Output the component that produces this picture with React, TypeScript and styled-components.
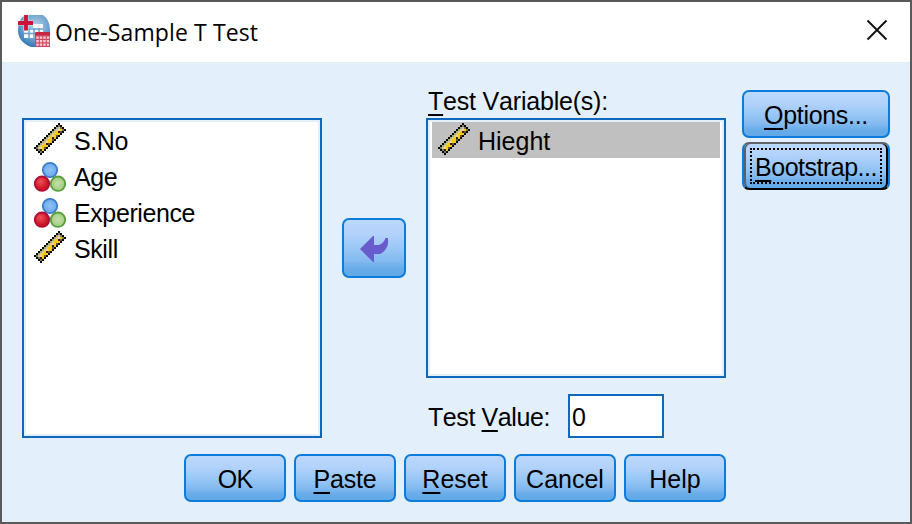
import React from 'react';
import styled, { createGlobalStyle, css } from 'styled-components';

const GlobalStyle = createGlobalStyle`
  *, *::before, *::after { box-sizing: border-box; }
  html, body { margin: 0; padding: 0; }
  button, input { font: inherit; color: inherit; margin: 0; padding: 0; }
`;

const Dialog = styled.div`
  width: 912px;
  height: 524px;
  display: flex;
  flex-direction: column;
  border: 2px solid #5a5a5a;
  background: #e3effb;
  color: #000;
  font-family: 'Liberation Sans', Arial, sans-serif;
  font-size: 25px;
  line-height: 36px;
  font-kerning: none;
  overflow: hidden;
`;

const TitleBar = styled.header`
  flex: none;
  height: 60px;
  display: flex;
  align-items: center;
  padding: 0 21px 0 16px;
  background: #fff;
  font-family: 'Open Sans', 'Noto Sans', sans-serif;
`;

const Title = styled.h1`
  flex: 1;
  margin: 0 0 0 5px;
  font-size: 23px;
  font-weight: 400;
  line-height: 32px;
  letter-spacing: 0.12px;
`;

const CloseButton = styled.button`
  width: 24px;
  height: 24px;
  margin-bottom: 4px;
  border: 0;
  background: none;
  display: flex;
`;

const Body = styled.main`
  flex: none;
  height: 376px;
  display: flex;
  align-items: flex-start;
  padding-left: 20px;
`;

const VariableList = styled.ul<{ $height: number }>`
  width: 300px;
  height: ${(p) => p.$height}px;
  margin: 0;
  padding: 2px 2px 0;
  list-style: none;
  background: #fff;
  border: 2px solid #0f68bd;
  box-shadow: inset 0 0 0 2px #e3effb;
`;

const SourceColumn = styled.section`
  margin-top: 56px;
`;

const VariableRow = styled.li<{ $selected?: boolean }>`
  height: 36px;
  margin: 0 2px;
  padding-left: 6px;
  display: flex;
  align-items: center;
  background: ${(p) => (p.$selected ? '#c0c0c0' : 'transparent')};
`;

const VariableName = styled.span<{ $tracking?: number }>`
  margin: 2px 0 0 8px;
  letter-spacing: ${(p) => p.$tracking ?? 0}px;
`;

const TargetColumn = styled.section`
  width: 300px;
  padding-top: 21px;
`;

const FieldLabel = styled.label<{ $tracking: number }>`
  display: block;
  margin-left: 2px;
  height: 35px;
  letter-spacing: ${(p) => p.$tracking}px;
  white-space: nowrap;
`;

const ValueRow = styled.div`
  display: flex;
  align-items: center;
  justify-content: space-between;
  width: 238px;
  margin-top: 16px;
`;

const ValueInput = styled.input`
  width: 96px;
  height: 44px;
  padding: 3px 0 0 2px;
  border: 2px solid #0f68bd;
  background: #fff;
  outline: none;
`;

const Key = styled.span`
  text-decoration: underline;
  text-decoration-thickness: 2px;
  text-underline-offset: 4px;
  text-decoration-skip-ink: none;
`;

const PushButton = styled.button<{ $width: number; $height?: number; $focused?: boolean; $tracking?: number }>`
  width: ${(p) => p.$width}px;
  height: ${(p) => p.$height ?? 48}px;
  display: flex;
  align-items: center;
  justify-content: center;
  padding: 2px 0 0;
  border: 2px solid #0b7bdc;
  border-radius: 7px;
  background: linear-gradient(#bbd7fc 0%, #b2d2fb 25%, #9ac8f6 50%, #84baf0 72%, #68ade9 86%, #62a7e7 100%);
  letter-spacing: ${(p) => p.$tracking ?? 0}px;
  white-space: nowrap;
  ${(p) =>
    p.$focused &&
    css`
      padding: 0;
      border-color: #5f6468 #0b7bdc #000 #0b7bdc;
      box-shadow: inset 2px 0 #55616c, inset -2px 0 #000;
    `}
`;

const FocusFrame = styled.span`
  width: 132px;
  height: 36px;
  border: 2px dotted #000;
  display: flex;
  align-items: center;
  justify-content: center;
  padding-top: 1px;
`;

const MoveSlot = styled.div`
  margin: 156px 20px 0;
`;

const SideButtons = styled.aside`
  display: flex;
  flex-direction: column;
  gap: 4px;
  margin: 28px 0 0 16px;
`;

const Footer = styled.footer`
  display: flex;
  gap: 8px;
  padding: 16px 0 0 182px;
`;

const Icon = styled.svg`
  display: block;
  flex: none;
`;

const ProductIcon = styled(Icon)`
  margin-bottom: 2px;
`;

const RulerSvg = styled(Icon)`
  margin-bottom: 2px;
`;

function AppIcon() {
  return (
    <ProductIcon width="32" height="32" viewBox="0 0 32 32">
      <defs>
        <radialGradient id="globe" cx="0.55" cy="0.35" r="0.65">
          <stop offset="0" stopColor="#b9d3ea" />
          <stop offset="0.6" stopColor="#6fa3cf" />
          <stop offset="1" stopColor="#3279b5" />
        </radialGradient>
      </defs>
      <path d="M7 0H25Q32 5 32 15V32H13Q0 27 0 15Q0 4 7 0Z" fill="url(#globe)" />
      <path d="M15 9H25V23H6V13H15Z" fill="#f4f9fd" />
      <path d="M6 14H25M6 18.5H24M11 13V23M16 13V23M21 13V23" stroke="#6f9fcb" strokeWidth="1.5" />
      <path d="M0 8H15M8 0V16" stroke="#fff" strokeWidth="6" opacity="0.35" />
      <path d="M0 8H15M8 0V15.5" stroke="#cf1039" strokeWidth="3.8" />
      <path d="M17 19Q17 17 19 17H32V32H17Z" fill="#cf4863" />
      <path d="M17 20V18Q17 17 19 17H32V20Z" fill="#c72743" />
      {[21.5, 25, 28.5].map((y) =>
        [18.3, 21.8, 25.3, 28.8].map((x) => (
          <rect key={`${x}-${y}`} x={x} y={y} width="2.4" height="2.3" fill="#f7ccd2" />
        )),
      )}
    </ProductIcon>
  );
}

const rulerCells: { x: number; y: number; fill: string }[] = [];
for (let y = 0; y < 16; y++) {
  for (let x = 0; x < 16; x++) {
    const across = x + y;
    const along = x - y;
    if (across < 12 || across > 18 || Math.abs(along) > 12) continue;
    let fill = '#ffc90c';
    if (across === 12 || across === 18 || Math.abs(along) === 12) fill = '#050505';
    else if (Math.abs(along) === 11) fill = '#77775a';
    else if (across === 13) fill = '#a9a97c';
    else if (across === 14) fill = '#d2cc8e';
    else if (across === 17) fill = x % 2 ? '#5d5a3c' : '#ffc90c';
    else if (across === 16 && x % 3 === 0) fill = '#29230c';
    else if (across === 15 && x % 3 === 0) fill = '#ffd09c';
    rulerCells.push({ x, y, fill });
  }
}

function RulerIcon() {
  return (
    <RulerSvg width="32" height="32" viewBox="0 0 16 16" shapeRendering="crispEdges">
      {rulerCells.map((c) => (
        <rect key={`${c.x}-${c.y}`} x={c.x} y={c.y} width="1" height="1" fill={c.fill} />
      ))}
    </RulerSvg>
  );
}

function NominalIcon() {
  return (
    <Icon width="32" height="32" viewBox="0 0 32 32">
      <defs>
        <radialGradient id="blueBall">
          <stop offset="0" stopColor="#90c2f5" />
          <stop offset="1" stopColor="#69a8ea" />
        </radialGradient>
        <radialGradient id="redBall" cx="0.4" cy="0.35">
          <stop offset="0" stopColor="#f0505a" />
          <stop offset="1" stopColor="#cd1525" />
        </radialGradient>
        <radialGradient id="greenBall">
          <stop offset="0" stopColor="#c3dfa7" />
          <stop offset="1" stopColor="#a1cd80" />
        </radialGradient>
      </defs>
      <circle cx="16" cy="10" r="7.2" fill="url(#blueBall)" stroke="#3b7ecb" strokeWidth="1.8" />
      <circle cx="24" cy="23.7" r="7.2" fill="url(#greenBall)" stroke="#5c9e3c" strokeWidth="1.8" />
      <circle cx="8" cy="23.7" r="7.2" fill="url(#redBall)" stroke="#b00f35" strokeWidth="1.8" />
    </Icon>
  );
}

function MoveArrowIcon() {
  return (
    <Icon width="28" height="26" viewBox="0 0 28 26">
      <path
        d="M0 13L13 0H14V9H19Q24 7 25.5 2H28V8Q27 13 22 17L20 18H14V26H13Z"
        fill="#685bcb"
      />
    </Icon>
  );
}

function CloseIcon() {
  return (
    <Icon width="24" height="24" viewBox="0 0 24 24">
      <path d="M2.5 2.5L21.5 21.5M21.5 2.5L2.5 21.5" stroke="#111" strokeWidth="1.9" />
    </Icon>
  );
}

const variables = [
  { name: 'S.No', scale: true },
  { name: 'Age', scale: false },
  { name: 'Experience', scale: false },
  { name: 'Skill', scale: true },
];

export default function App() {
  return (
    <>
      <GlobalStyle />
      <Dialog role="dialog" aria-label="One-Sample T Test">
        <TitleBar>
          <AppIcon />
          <Title>One-Sample T Test</Title>
          <CloseButton aria-label="Close">
            <CloseIcon />
          </CloseButton>
        </TitleBar>
        <Body>
          <SourceColumn>
            <VariableList $height={320}>
              {variables.map((v) => (
                <VariableRow key={v.name}>
                  {v.scale ? <RulerIcon /> : <NominalIcon />}
                  <VariableName $tracking={-0.4}>{v.name}</VariableName>
                </VariableRow>
              ))}
            </VariableList>
          </SourceColumn>
          <MoveSlot>
            <PushButton $width={64} $height={60} aria-label="Move variable back">
              <MoveArrowIcon />
            </PushButton>
          </MoveSlot>
          <TargetColumn>
            <FieldLabel $tracking={-0.2}>
              <Key>T</Key>est Variable(s):
            </FieldLabel>
            <VariableList $height={260}>
              <VariableRow $selected>
                <RulerIcon />
                <VariableName>Hieght</VariableName>
              </VariableRow>
            </VariableList>
            <ValueRow>
              <FieldLabel $tracking={-0.4} htmlFor="test-value">
                Test <Key>V</Key>alue:
              </FieldLabel>
              <ValueInput id="test-value" defaultValue="0" />
            </ValueRow>
          </TargetColumn>
          <SideButtons>
            <PushButton $width={148} $tracking={-0.3}>
              <span>
                <Key>O</Key>ptions...
              </span>
            </PushButton>
            <PushButton $width={148} $tracking={-0.5} $focused>
              <FocusFrame>
                <span>
                  <Key>B</Key>ootstrap...
                </span>
              </FocusFrame>
            </PushButton>
          </SideButtons>
        </Body>
        <Footer>
          <PushButton $width={102} $tracking={-0.8}>OK</PushButton>
          <PushButton $width={102} $tracking={-0.2}>
            <span>
              <Key>P</Key>aste
            </span>
          </PushButton>
          <PushButton $width={102}>
            <span>
              <Key>R</Key>eset
            </span>
          </PushButton>
          <PushButton $width={102}>Cancel</PushButton>
          <PushButton $width={102}>Help</PushButton>
        </Footer>
      </Dialog>
    </>
  );
}
